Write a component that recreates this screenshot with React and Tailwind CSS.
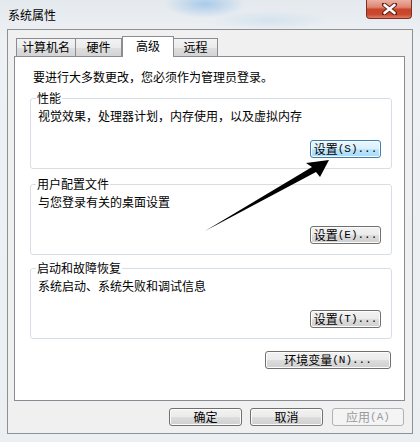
import React from "react";

const btn =
  "h-[18px] flex items-center justify-center rounded-[3px] border border-[#707070] bg-[linear-gradient(to_bottom,#f2f2f2_0%,#ebebeb_50%,#dddddd_51%,#cfcfcf_100%)] shadow-[inset_0_0_0_1px_#fcfcfc] text-[12px] leading-[14px] text-black";

const btnFocus =
  "h-[18px] flex items-center justify-center rounded-[3px] border border-[#3c7fb1] bg-[linear-gradient(to_bottom,#eaf6fd_0%,#d9f0fc_50%,#bee6fd_51%,#a7d9f5_100%)] shadow-[inset_0_0_0_1px_#f4fbff] text-[12px] leading-[14px] text-black";

function Label({ zh, key2 }) {
  return (
    <>
      <span>{zh}</span>
      <span className="font-['Liberation_Mono',monospace] text-[11px]">({key2})...</span>
    </>
  );
}

function Group({ title, desc, k, focus }) {
  return (
    <div className="relative ml-[15px] w-[362px] h-[71px] border border-[#d5dfe5] rounded-[3px] flex flex-col">
      <div className="absolute left-[5px] top-[-8px] bg-white px-[1px] leading-[14px]">{title}</div>
      <div className="pl-[7px] pt-[10px] leading-[14px]">{desc}</div>
      <div className={(focus ? btnFocus : btn) + " w-[71px] self-end mt-auto mr-[10px] mb-[10px]"}>
        <Label zh="设置" key2={k} />
      </div>
    </div>
  );
}

export default function App() {
  return (
    <div className="relative w-[420px] h-[442px] overflow-hidden text-[12px] text-black font-['Noto_Sans_CJK_SC',sans-serif] bg-[radial-gradient(ellipse_40px_14px_at_205px_4px,#a8cbea_0%,transparent_100%),radial-gradient(ellipse_60px_10px_at_270px_20px,#d4e3ee_0%,transparent_100%),linear-gradient(to_bottom,#e4e9ee_0%,#eef1f4_40px,#eceff2_100%)]">
      {/* title bar */}
      <div className="h-[29px] pl-[8px] pt-[8px] leading-[14px] text-[12px]">系统属性</div>

      {/* close button */}
      <div className="absolute top-0 right-[8px] w-[46px] h-[19px] rounded-b-[4px] border border-t-0 border-[#7a2f22] bg-[linear-gradient(to_bottom,#eab0a2_0%,#df8570_40%,#c9442b_52%,#c9492f_80%,#dc7d62_100%)] flex items-center justify-center">
        <svg width="15" height="12" viewBox="0 0 15 12">
          <path d="M2 1.5 L13 10.5 M13 1.5 L2 10.5" stroke="#5a2118" strokeWidth="4.4" strokeLinecap="round" />
          <path d="M2.5 2 L12.5 10 M12.5 2 L2.5 10" stroke="#ffffff" strokeWidth="2.6" strokeLinecap="round" />
        </svg>
      </div>

      {/* client area */}
      <div className="ml-[7px] w-[406px] h-[405px] border border-[#8e9194] bg-[#f0f0f0] flex flex-col pl-[6px] pt-[6px]">
        {/* tabs */}
        <div className="flex items-start h-[20px] ml-[2px]">
          <div className="mt-[2px] h-[18px] w-[60px] border border-b-0 border-[#898c95] bg-[linear-gradient(to_bottom,#f3f3f3_0%,#ebebeb_50%,#dedede_51%,#d4d4d4_100%)] flex justify-center leading-[14px] pt-[1px]">计算机名</div>
          <div className="mt-[2px] h-[18px] w-[46px] border border-b-0 border-l-0 border-[#898c95] bg-[linear-gradient(to_bottom,#f3f3f3_0%,#ebebeb_50%,#dedede_51%,#d4d4d4_100%)] flex justify-center leading-[14px] pt-[1px]">硬件</div>
          <div className="relative z-10 h-[21px] w-[52px] border border-b-0 border-[#898c95] bg-white flex justify-center leading-[14px] pt-[2px]">高级</div>
          <div className="mt-[2px] h-[18px] w-[44px] border border-b-0 border-l-0 border-[#898c95] bg-[linear-gradient(to_bottom,#f3f3f3_0%,#ebebeb_50%,#dedede_51%,#d4d4d4_100%)] flex justify-center leading-[14px] pt-[1px]">远程</div>
        </div>

        {/* tab page */}
        <div className="w-[391px] h-[345px] border border-[#898c95] bg-white flex flex-col">
          <div className="pl-[18px] pt-[13px] leading-[14px]">要进行大多数更改，您必须作为管理员登录。</div>
          <div className="h-[14px]" />
          <Group title="性能" desc="视觉效果，处理器计划，内存使用，以及虚拟内存" k="S" focus />
          <div className="h-[15px]" />
          <Group title="用户配置文件" desc="与您登录有关的桌面设置" k="E" />
          <div className="h-[13px]" />
          <Group title="启动和故障恢复" desc="系统启动、系统失败和调试信息" k="T" />
          <div className="ml-[15px] w-[361px] flex justify-end mt-[12px]">
            <div className={btn + " w-[126px]"}>
              <Label zh="环境变量" key2="N" />
            </div>
          </div>
        </div>

        {/* dialog buttons */}
        <div className="flex justify-end gap-[8px] pr-[8px] mt-[7px]">
          <div className={btn + " w-[73px]"}>确定</div>
          <div className={btn + " w-[73px] mr-[1px]"}>取消</div>
          <div className="h-[18px] w-[72px] flex items-center justify-center rounded-[3px] border border-[#adb2b5] bg-[#f4f4f4] text-[#9a9a9a] leading-[14px]">
            <span>应用</span>
            <span className="font-['Liberation_Mono',monospace] text-[11px]">(A)</span>
          </div>
        </div>
      </div>

      {/* annotation arrow */}
      <svg className="absolute left-0 top-0 pointer-events-none" width="420" height="442" viewBox="0 0 420 442">
        <polygon points="329,160 306,163 312,167 205,231 316,172 320,177" fill="#000" />
      </svg>
    </div>
  );
}
